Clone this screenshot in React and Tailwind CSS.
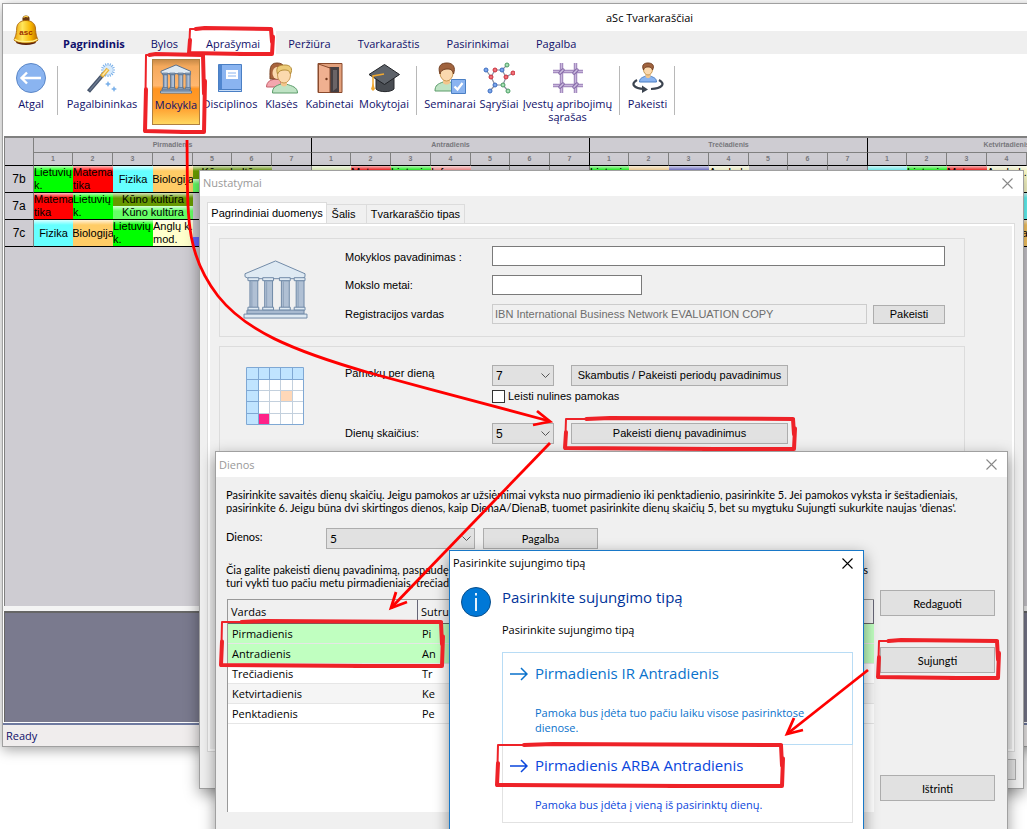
import React from 'react';

const menuItems = ['Bylos', 'Aprašymai', 'Peržiūra', 'Tvarkaraštis', 'Pasirinkimai', 'Pagalba'];
const days = ['Pirmadienis', 'Antradienis', 'Trečiadienis', 'Ketvirtadienis'];
const colWidths = ['w-[39px]', 'w-[40px]', 'w-[40px]', 'w-[40px]', 'w-[39px]', 'w-[40px]', 'w-[40px]'];

const subjects = {
  L: { lines: ['Lietuvių', 'k.'], color: 'bg-[#00ff00]' },
  M: { lines: ['Matema', 'tika'], color: 'bg-[#ff0000]' },
  F: { lines: ['Fizika'], color: 'bg-[#66ffff]' },
  B: { lines: ['Biologija'], color: 'bg-[#ffcc66]' },
  A: { lines: ['Anglų k.', 'mod.'], color: 'bg-[#ffffcc]' },
  I: { lines: ['Inf.', ''], color: 'bg-[#ff8080]' },
  y: { lines: [], color: 'bg-[#e4f7b4]' },
  t: { lines: [], color: 'bg-[#ffd78c]' },
  p: { lines: [], color: 'bg-[#6666cc]' },
  c: { lines: [], color: 'bg-[#66ffff]' },
};

// K takes two columns, "-" is an empty lesson
const classes = [
  { name: '7b', lessons: 'LMFBK-' + 'yMLI---' + 'LtpA---' + 'cLMA---' },
  { name: '7a', lessons: 'MLK---' + '-------' + '-------' + '---F---' },
  { name: '7c', lessons: 'FBLAW--' + '-------' + '-------' + '---B---' },
];

const dayRows = [
  ['Pirmadienis', 'Pi', 'bg-[#c0ffc0]'],
  ['Antradienis', 'An', 'bg-[#c0ffc0]'],
  ['Trečiadienis', 'Tr', 'bg-white'],
  ['Ketvirtadienis', 'Ke', 'bg-[#f5f5f5]'],
  ['Penktadienis', 'Pe', 'bg-white'],
];

const BellLogo = () => (
  <svg className="w-8 h-8" viewBox="0 0 32 32" aria-hidden="true">
    <defs>
      <linearGradient id="bell" x1="0" x2="1">
        <stop offset="0" stopColor="#e89a00" />
        <stop offset="0.35" stopColor="#ffe65c" />
        <stop offset="0.7" stopColor="#f7b500" />
        <stop offset="1" stopColor="#b86a00" />
      </linearGradient>
    </defs>
    <ellipse cx="15" cy="28" rx="10" ry="3" fill="#5a1f08" />
    <circle cx="15" cy="5" r="3.600" fill="#6b3a10" />
    <path d="M12.500 3.600a3 3 0 0 1 4.600-.4" stroke="#ffd34a" fill="none" strokeWidth="1.200" />
    <path d="M3 26c1-3 2.500-5 2.700-12C6 9 10 6.500 15 6.500S24 9 24.500 14c.2 7 1.500 9 2.500 12-3 4-21 4-24 0z" fill="url(#bell)" stroke="#a35c00" strokeWidth="0.800" />
    <path d="M3.500 25c4 3.600 19 3.600 23 0" stroke="#ffef8a" fill="none" strokeWidth="1.300" />
    <text x="15" y="20.500" textAnchor="middle" fontSize="8" fontWeight="700" fill="#9c2f00" fontFamily="Liberation Sans, sans-serif">asc</text>
  </svg>
);

const BackIcon = () => (
  <svg className="w-8 h-8" viewBox="0 0 32 32">
    <circle cx="16" cy="16" r="14.500" fill="#8ab4f0" stroke="#5b87c7" />
    <path d="M26 16H7M12 10.500L6.500 16l5.500 5.500" fill="none" stroke="#fff" strokeWidth="2.400" />
  </svg>
);

const WandIcon = () => (
  <svg className="w-8 h-8" viewBox="0 0 32 32">
    <g stroke="#7db2ea" strokeWidth="1.200">
      <path d="M22 1v14M15 8h14M17 3l10 10M27 3L17 13M19.300 1.500l5.400 13M24.700 1.500l-5.400 13M15.500 5.300l13 5.400M28.500 5.300l-13 5.400" />
    </g>
    <circle cx="22" cy="8" r="4.500" fill="#d8ebfc" />
    <path d="M2.500 29.500L18 11.500" stroke="#45536a" strokeWidth="4" />
    <path d="M3.500 28.500L17 12.500" stroke="#6d7c93" strokeWidth="1.200" />
    <path d="M15.500 14.500L22 7" stroke="#e8b33c" strokeWidth="4" />
    <path d="M16.500 13.500L21.500 7.500" stroke="#ffe9a8" strokeWidth="1.500" />
    <path d="M22 19l1 2 2 1-2 1-1 2-1-2-2-1 2-1zM28 24l1 2 2 1-2 1-1 2-1-2-2-1 2-1z" fill="#7db2ea" />
  </svg>
);

const SchoolIcon = ({ className, line = '#6f89a6', lineWidth = 1 }) => (
  <svg className={className} viewBox="0 0 66 62">
    <g stroke={line} strokeWidth={lineWidth}>
      <path d="M2 15L33 2l30 13v3l-3 2H6l-4-2z" fill="#dfeaf3" />
      {[9, 24, 41, 56].map((x) => (
        <g key={x}>
          <path d={`M${x - 2} 22h8v28h-8z`} fill="#b0c0d4" />
          <path d={`M${x} 23v26`} stroke="#8da1bb" />
          <path d={`M${x - 4} 19h11v3h-11zM${x - 4} 49h11v3h-11z`} fill="#dfeaf3" />
        </g>
      ))}
      <path d="M4 52h58v4H4z" fill="#a8bad0" />
      <path d="M1 56h64v4H1z" fill="#dfeaf3" />
    </g>
  </svg>
);

const BookIcon = () => (
  <svg className="w-8 h-8" viewBox="0 0 32 32">
    <path d="M4.500 2.500h23v27h-23z" fill="#8ab4f0" stroke="#4a7fc4" />
    <path d="M5 3h3v26H5z" fill="#4f86cf" />
    <path d="M4.500 27.500h23v2h-23z" fill="#c9def8" stroke="#4a7fc4" />
    <path d="M12 8h12v9H12z" fill="#fff" />
    <path d="M14 11h8M14 14h8" stroke="#8ab4f0" />
  </svg>
);

const PupilsIcon = () => (
  <svg className="w-8 h-8" viewBox="0 0 32 32">
    <path d="M.5 25c.3-6 4-6.500 8-8h5l3 8z" fill="#f4a6ae" stroke="#c4606c" />
    <path d="M4 17C4 8 3 1 11 1s9 6 8 16z" fill="#a8633c" stroke="#7b4526" />
    <ellipse cx="11" cy="11" rx="4.500" ry="6" fill="#fbd9ae" />
    <path d="M6.500 31c0-6 3-7 8.500-9h5c6 2 11.500 3 11.500 9z" fill="#bfe3c4" stroke="#5c9c6b" />
    <path d="M15 17h6v6c-2 2-4 2-6 0z" fill="#f3c68d" />
    <ellipse cx="18" cy="13" rx="6.500" ry="8" fill="#fbd9ae" stroke="#c99a54" />
    <path d="M11.500 12C9 4 14 3 19 3c6 0 8 4 5.500 9-1-4-4-4-6.500-4s-5.500 1-6.500 4z" fill="#eccb78" stroke="#b58e3c" />
  </svg>
);

const DoorIcon = () => (
  <svg className="w-8 h-8" viewBox="0 0 32 32">
    <path d="M4 1.500h24v29H4z" fill="#e2a07c" stroke="#8a4a2c" />
    <path d="M13 5h12v25.500H13z" fill="#453f42" />
    <path d="M4.500 2L16 6v24.500H4.500z" fill="#f0b090" stroke="#8a4a2c" />
    <path d="M19 8h4v18l-4 3z" fill="#6b6466" />
    <circle cx="12.500" cy="17" r="1.200" fill="#70351c" />
  </svg>
);

const CapIcon = () => (
  <svg className="w-8 h-8" viewBox="0 0 32 32">
    <path d="M8 16v11c3 3.500 15 3.500 18 0V16z" fill="#484c52" stroke="#26282c" />
    <path d="M1 12.500L16.500 2.500 31.500 12.500 16.500 22.500z" fill="#5e636a" stroke="#202226" />
    <path d="M16 12L5 14v13" stroke="#f0a830" strokeWidth="1.500" fill="none" />
    <path d="M5 21l2 6-2 2-2-2z" fill="#f0a830" />
  </svg>
);

const SeminarIcon = () => (
  <svg className="w-8 h-8" viewBox="0 0 32 32">
    <path d="M1 29c0-6 3-7 8-9h7c5 2 7 4 7 9z" fill="#bfe3c4" stroke="#5c9c6b" />
    <path d="M9 15h7v6c-2 2-5 2-7 0z" fill="#f3c68d" />
    <ellipse cx="12.500" cy="11" rx="6.500" ry="8" fill="#fbd9ae" stroke="#c99a54" />
    <path d="M6 12C3 3 8 1 13 1c6 0 9 4 6.500 11-1-5-4-5-6.500-5S7 8 6 12z" fill="#a0633e" stroke="#744123" />
    <path d="M17.500 17.500h14v14h-14z" fill="#8ab4f0" stroke="#4a7fc4" />
    <path d="M20.500 24.500l3 3 5-6.500" stroke="#fff" strokeWidth="2.200" fill="none" />
  </svg>
);

const RelationsIcon = () => (
  <svg className="w-8 h-8" viewBox="0 0 32 32">
    <g strokeWidth="1.200" fill="none" stroke="#8a8fa0">
      <path d="M3 8l5 7 4-7h7l4 7-3 8h-8L8 15M19 8l5-5M23 15l7-4M20 23l5 6M12 23l-5 6" />
    </g>
    <g strokeWidth="1">
      {[[3, 8], [19, 8], [12, 23], [7, 29]].map(([x, y]) => <circle key={x} cx={x} cy={y} r="2" fill="#7aa5ea" stroke="#3c6cc0" />)}
      {[[12, 8], [8, 15], [23, 15], [30, 11]].map(([x, y]) => <circle key={x} cx={x} cy={y} r="2" fill="#f07078" stroke="#c8303c" />)}
      {[[24, 3], [20, 23], [25, 29]].map(([x, y]) => <circle key={x} cx={x} cy={y} r="2" fill="#a8e0b4" stroke="#4a9c64" />)}
    </g>
  </svg>
);

const GridIcon = () => (
  <svg className="w-8 h-8" viewBox="0 0 32 32">
    <g stroke="#a58cc0" strokeWidth="3.500">
      <path d="M9.500 1v30M23.500 1v30M1 9.500h30M1 23.500h30" />
    </g>
    <g stroke="#c9b8dc" strokeWidth="1">
      <path d="M9.500 1v30M23.500 1v30M1 9.500h30M1 23.500h30" />
    </g>
    <g stroke="#8468a6" strokeWidth="3.500" strokeLinecap="round">
      <path d="M8 11l3-3M22 11l3-3M8 25l3-3M22 25l3-3" />
    </g>
    <g stroke="#cdbde0" strokeWidth="1.500" strokeLinecap="round">
      <path d="M8 11l3-3M22 11l3-3M8 25l3-3M22 25l3-3" />
    </g>
  </svg>
);

const SwitchUserIcon = () => (
  <svg className="w-8 h-8" viewBox="0 0 32 32">
    <path d="M7.500 20c0-4 3-4.500 6-6h5c3 1.500 6 2 6 6z" fill="#8ab4f0" stroke="#4a7fc4" />
    <path d="M13.500 11h5v4c-1.500 1.500-3.500 1.500-5 0z" fill="#f3c68d" />
    <ellipse cx="16" cy="7.500" rx="4.500" ry="5.500" fill="#fbd9ae" stroke="#c99a54" />
    <path d="M11.500 8C9 2 13 1 16 1c4 0 7 2 4.500 7-1-3-3-3-4.500-3s-3.500 0-4.500 3z" fill="#a0633e" stroke="#744123" />
    <path d="M5 18c-7 4-3 8.500 7 9M27 18c7 4 3 8.500-8 9" fill="none" stroke="#3c4450" strokeWidth="2.200" />
    <path d="M10 23.500l6 4-6 3.500z" fill="#3c4450" />
  </svg>
);

const PlanIcon = () => (
  <svg className="w-[58px] h-[58px]" viewBox="0 0 58 58">
    <path d="M.5.5h57v57H.5z" fill="#fff" />
    <path d="M1 1h56v11H12v45H1z" fill="#c0e4ff" />
    <path d="M35 24h11v10H35z" fill="#ffd8b8" />
    <path d="M13 46h10v11H13z" fill="#ff2288" />
    <path d="M12.500 12v46M23.500 12v46M34.500 12v46M46.500 12v46M12 23.500h46M12 34.500h46M12 46.500h46" stroke="#c3d0dd" />
    <path d="M.5.5h57v57H.5zM12.500 0v58M0 12.500h58M23.500 0v12M34.500 0v12M46.500 0v12M0 23.500h12M0 34.500h12M0 46.500h12" stroke="#7fa8d4" fill="none" />
  </svg>
);

const CloseButton = ({ className }) => (
  <button type="button" aria-label="Uždaryti" className={`mr-2.5 ${className}`}>
    <svg className="w-[11px] h-[11px]" viewBox="0 0 11 11">
      <path d="M.5.5l10 10M10.500.5l-10 10" stroke="currentColor" fill="none" strokeWidth="1.100" />
    </svg>
  </button>
);

const ToolButton = ({ label, icon, className }) => (
  <button type="button" className={`flex flex-col items-center shrink-0 pt-[3px] text-center leading-[13px] whitespace-pre-line ${className}`}>
    {icon}
    <span className="mt-[3px]">{label}</span>
  </button>
);

const Divider = ({ className }) => (
  <div className={`flex shrink-0 justify-center pt-[7px] ${className}`}>
    <div className="w-px h-[49px] bg-[#b8b8b8]" />
  </div>
);

const PushButton = ({ children, className }) => (
  <button type="button" className={`shrink-0 bg-[#e1e1e1] border border-[#adadad] text-center ${className}`}>{children}</button>
);

const Select = ({ id, value, className }) => (
  <div className={`relative shrink-0 ${className}`}>
    <select id={id} defaultValue={value} className="appearance-none w-full h-[21px] pl-[3px] bg-[#e1e1e1] border border-[#adadad] text-[12px] leading-[18px]">
      <option>{value}</option>
    </select>
    <svg className="absolute right-1 top-2 w-[9px] h-[6px] pointer-events-none" viewBox="0 0 9 6">
      <path d="M.5.5l4 4 4-4" stroke="#555" fill="none" />
    </svg>
  </div>
);

const shade = 'bg-[linear-gradient(to_bottom,rgba(255,255,255,0.75),rgba(255,255,255,0)_5px)]';

const Lesson = ({ code }) => {
  if (code === 'K') {
    return (
      <div className="h-[26px] text-center leading-[13px]">
        <div className={`h-[13px] bg-[#669900] ${shade}`}>Kūno kultūra</div>
        <div className={`h-[13px] bg-[#66ff66] ${shade}`}>Kūno kultūra</div>
      </div>
    );
  }
  if (code === 'W') {
    return (
      <div className="flex flex-col justify-end h-[26px]">
        <div className="h-[9px] bg-[#6666ff]" />
      </div>
    );
  }
  const s = subjects[code];
  if (!s) return <div className="h-[26px] border-r border-[#808080]" />;
  return (
    <div className={`flex flex-col justify-center h-[26px] leading-[13px] overflow-hidden whitespace-nowrap ${s.lines.length === 1 ? 'items-center' : ''} ${s.color} ${shade}`}>
      {s.lines.map((l) => <span key={l} className="block h-[13px]">{l}</span>)}
    </div>
  );
};

const Timetable = () => (
  <table className="table-fixed border-separate border-spacing-0 w-[1141px] font-['Liberation_Sans',Arial,sans-serif] text-[11px]">
    <colgroup>
      <col className="w-[29px]" />
      {days.map((d) => colWidths.map((w, i) => <col key={d + i} className={w} />))}
    </colgroup>
    <thead className="text-[7px] leading-[10px] text-[#77777c]">
      <tr>
        <th rowSpan={2} className="p-0 border-b border-r border-b-black border-r-[#808080]" />
        {days.map((d) => (
          <th key={d} colSpan={7} scope="colgroup" className="h-[15px] p-0 border-b border-r border-b-[#808080] border-r-black">{d}</th>
        ))}
      </tr>
      <tr>
        {days.map((d) => colWidths.map((w, i) => (
          <th key={d + i} scope="col" className={`h-[13px] p-0 border-b border-r border-b-black ${i === 6 ? 'border-r-black' : 'border-r-[#808080]'}`}>{i + 1}</th>
        )))}
      </tr>
    </thead>
    <tbody>
      {classes.map((c) => (
        <tr key={c.name}>
          <th scope="row" className="p-0 border-b border-r border-b-black border-r-[#808080] text-[12px] font-normal">{c.name}</th>
          {c.lessons.split('').map((code, i) => (
            <td key={i} colSpan={code === 'K' ? 2 : 1} className="p-0 border-b border-black">
              <Lesson code={code} />
            </td>
          ))}
        </tr>
      ))}
    </tbody>
  </table>
);

const MainWindow = () => (
  <div className="absolute top-[3px] left-[2px] -right-8 flex flex-col h-[744px] overflow-hidden bg-white border border-[#a0a0a0] shadow-[0_3px_12px_rgba(0,0,0,0.35)] font-['Open_Sans','Noto_Sans',sans-serif] text-[11px] text-[#10106a]">
    <div className="relative shrink-0">
      <div className="absolute left-2 top-2.5"><BellLogo /></div>
      <h1 className="h-[27px] pl-[603px] leading-[27px] text-black">aSc Tvarkaraščiai</h1>
      <nav className="flex items-stretch gap-[3px] h-[23px] pl-[47px] bg-[#efefef] leading-[25px]">
        <a href="#pagrindinis" className="pl-[13px] pr-[11px] font-bold">Pagrindinis</a>
        {menuItems.map((m) => (
          <a key={m} href={`#${m}`} className={m === 'Aprašymai' ? 'px-4 -mx-[3px] bg-white' : 'px-3'}>{m}</a>
        ))}
      </nav>
    </div>
    <div className="flex items-start shrink-0 h-[82px] pt-[5px] pl-[5px]">
      <ToolButton label="Atgal" icon={<BackIcon />} className="w-[46px]" />
      <Divider className="w-[7px]" />
      <ToolButton label="Pagalbininkas" icon={<WandIcon />} className="w-[82px]" />
      <ToolButton
        label="Mokykla"
        icon={<SchoolIcon className="w-8 h-8" line="#55708f" lineWidth={2} />}
        className="w-[48px] h-[66px] ml-[9px] border border-[#b08040] bg-[linear-gradient(to_bottom,#c98b48,#f5a95c_10%,#ffb870_40%,#ff9420_45%,#ffa030_75%,#ffd860)]"
      />
      <ToolButton label="Disciplinos" icon={<BookIcon />} className="w-[60px]" />
      <ToolButton label="Klasės" icon={<PupilsIcon />} className="w-[43px]" />
      <ToolButton label="Kabinetai" icon={<DoorIcon />} className="w-[53px]" />
      <ToolButton label="Mokytojai" icon={<CapIcon />} className="w-[56px]" />
      <Divider className="w-[9px]" />
      <ToolButton label="Seminarai" icon={<SeminarIcon />} className="w-[58px]" />
      <ToolButton label="Sąryšiai" icon={<RelationsIcon />} className="w-[40px]" />
      <ToolButton label={'Įvestų apribojimų\nsąrašas'} icon={<GridIcon />} className="w-[97px]" />
      <Divider className="w-[7px]" />
      <ToolButton label="Pakeisti" icon={<SwitchUserIcon />} className="w-[49px]" />
      <Divider className="w-[5px]" />
    </div>
    <div className="grow ml-px overflow-hidden bg-[#ceccd2] border-t-2 border-l border-[#808080] text-black">
      <Timetable />
    </div>
    <div className="shrink-0 h-[5px] bg-[#f4f4f4]" />
    <div className="shrink-0 h-[111px] ml-px bg-[#7a7a8e] border-t-2 border-l border-[#666]" />
    <div className="shrink-0 h-[23px] mt-px bg-[#f0eded] border-t-2 border-[#6f7aa0] pl-[3px] leading-[22px]">Ready</div>
  </div>
);

const SettingsDialog = () => (
  <section className="absolute left-[199px] top-[170px] flex flex-col w-[825px] h-[619px] bg-[#f0f0f0] border border-[#a0a0a0] shadow-[0_5px_14px_rgba(0,0,0,0.4)] font-['Liberation_Sans',Arial,sans-serif] text-[11px]">
    <header className="flex items-center justify-between h-[25px] shrink-0 pl-[3px] bg-white text-[11px] text-[#999] font-['Open_Sans','Noto_Sans',sans-serif]">
      <h2>Nustatymai</h2>
      <CloseButton className="text-[#888]" />
    </header>
    <div className="flex items-end pt-1.5 pl-[7px]">
      <button type="button" className="h-[21px] w-[120px] bg-white border border-b-0 border-[#dcdcdc]">Pagrindiniai duomenys</button>
      <button type="button" className="h-[19px] w-[40px] pr-1.5 border border-l-0 border-b-0 border-[#dcdcdc]">Šalis</button>
      <button type="button" className="h-[19px] w-[98px] border border-l-0 border-b-0 border-[#dcdcdc]">Tvarkaraščio tipas</button>
    </div>
    <div className="grow ml-[7px] mr-2 p-[11px] pt-3.5 border border-[#dcdcdc] shadow-[inset_0_0_0_2px_#fff]">
      <div className="flex h-[99px] w-[746px] pl-[23px] border border-[#dcdcdc]">
        <div className="w-[102px] pt-5"><SchoolIcon className="w-[65px] h-[61px]" /></div>
        <div className="flex flex-col gap-[9px] pt-[7px]">
          <div className="flex">
            <label htmlFor="school" className="w-[147px] leading-[22px] h-5">Mokyklos pavadinimas :</label>
            <input id="school" type="text" className="w-[453px] h-[20px] px-1 bg-white border border-[#7a7a7a]" />
          </div>
          <div className="flex">
            <label htmlFor="year" className="w-[147px] leading-[20px]">Mokslo metai:</label>
            <input id="year" type="text" className="w-[150px] h-[20px] px-1 bg-white border border-[#7a7a7a]" />
          </div>
          <div className="flex items-center">
            <label htmlFor="owner" className="w-[147px] leading-[18px]">Registracijos vardas</label>
            <input id="owner" type="text" disabled defaultValue="IBN International Business Network EVALUATION COPY" className="w-[375px] h-[20px] px-0.5 bg-[#f0f0f0] border border-[#ccc] text-[#6d6d6d]" />
            <PushButton className="w-[72px] h-[19px] ml-1.5">Pakeisti</PushButton>
          </div>
        </div>
      </div>
      <div className="flex h-[210px] w-[746px] mt-[9px] pl-[26px] border border-[#dcdcdc]">
        <div className="w-[99px] pt-5"><PlanIcon /></div>
        <div className="pt-[18px]">
          <div className="flex">
            <label htmlFor="lessons" className="w-[147px] leading-[17px]">Pamokų per dieną</label>
            <Select id="lessons" value="7" className="w-[62px]" />
            <PushButton className="w-[217px] h-[21px] ml-[17px]">Skambutis / Pakeisti periodų pavadinimus</PushButton>
          </div>
          <label className="flex items-center gap-[3px] h-[20px] ml-[147px]">
            <input type="checkbox" className="appearance-none w-[13px] h-[13px] bg-white border border-[#333]" />
            Leisti nulines pamokas
          </label>
          <div className="flex mt-[17px]">
            <label htmlFor="dayCount" className="w-[147px] leading-[20px]">Dienų skaičius:</label>
            <Select id="dayCount" value="5" className="w-[62px]" />
            <PushButton className="w-[217px] h-[21px] ml-[17px]">Pakeisti dienų pavadinimus</PushButton>
          </div>
        </div>
      </div>
    </div>
    <footer className="flex justify-end pt-[7px] pr-[7px] pb-2">
      <PushButton className="w-[75px] h-[21px]" />
    </footer>
  </section>
);

const DaysDialog = () => (
  <section className="absolute left-[215px] top-[451px] flex flex-col w-[793px] h-[420px] bg-[#f0f0f0] border border-[#a0a0a0] shadow-[0_5px_14px_rgba(0,0,0,0.4)] font-['Lato','Open_Sans',sans-serif] text-[11px] leading-[13px]">
    <header className="flex items-center justify-between h-[25px] shrink-0 pl-[3px] bg-white text-[#999] font-['Open_Sans','Noto_Sans',sans-serif]">
      <h2>Dienos</h2>
      <CloseButton className="text-[#888]" />
    </header>
    <div className="px-2.5 pt-[11px]">
      <p className="whitespace-nowrap">
        Pasirinkite savaitės dienų skaičių. Jeigu pamokos ar užsiėmimai vyksta nuo pirmadienio iki penktadienio, pasirinkite 5. Jei pamokos vyksta ir šeštadieniais,<br />
        pasirinkite 6. Jeigu būna dvi skirtingos dienos, kaip DienaA/DienaB, tuomet pasirinkite dienų skaičių 5, bet su mygtuku Sujungti sukurkite naujas 'dienas'.
      </p>
      <div className="flex mt-3.5">
        <label htmlFor="days" className="w-[100px] pt-0.5">Dienos:</label>
        <Select id="days" value="5" className="w-[149px]" />
        <PushButton className="w-[115px] h-[21px] ml-2">Pagalba</PushButton>
      </div>
      <div className="w-[642px] mt-3.5">
        <p className="flex justify-between"><span>Čia galite pakeisti dienų pavadinimą, paspaudę</span><span>s</span></p>
        <p>turi vykti tuo pačiu metu pirmadieniais, trečiadieniais</p>
      </div>
    </div>
    <div className="flex pl-[11px] mt-2.5">
      <div className="w-[647px] h-[213px] bg-white border-t border-l border-[#999]">
        <table className="w-full table-fixed border-separate border-spacing-0 text-left font-['Open_Sans','Noto_Sans',sans-serif]">
          <colgroup><col className="w-[190px]" /><col /></colgroup>
          <thead>
            <tr className="bg-[#f0f0f0]">
              <th scope="col" className="h-[24px] p-0 pl-[3px] font-normal border-b border-[#666] shadow-[inset_-1px_0_0_#667]">Vardas</th>
              <th scope="col" className="h-[24px] p-0 pl-[3px] font-normal border-b border-[#666] shadow-[inset_-1px_0_0_#667]">Sutrumpinimas</th>
            </tr>
          </thead>
          <tbody>
            {dayRows.map(([name, short, bg]) => (
              <tr key={name} className={bg}>
                <td className="h-[20px] p-0 pl-1 border-b border-[#e6e6e6]">{name}</td>
                <td className="h-[20px] p-0 pl-1 border-b border-[#e6e6e6]">{short}</td>
              </tr>
            ))}
          </tbody>
        </table>
      </div>
      <div className="flex flex-col ml-1.5 -mt-[9px]">
        <PushButton className="w-[115px] h-[26px]">Redaguoti</PushButton>
        <PushButton className="w-[115px] h-[26px] mt-[31px]">Sujungti</PushButton>
        <PushButton className="w-[115px] h-[26px] mt-[102px]">Ištrinti</PushButton>
      </div>
    </div>
  </section>
);

const Choice = ({ title, text, className }) => (
  <button type="button" className={`flex items-start w-full pl-[7px] pt-[11px] text-left border ${className}`}>
    <svg className="w-[18px] h-[14px] mt-[3px]" viewBox="0 0 18 14">
      <path d="M0 7h17M11 1l6 6-6 6" stroke="currentColor" fill="none" strokeWidth="1.500" />
    </svg>
    <span className="ml-[7px]">
      <span className="block h-[41px] text-[15px] leading-[19px]">{title}</span>
      <span className="block leading-[15px] whitespace-pre-line">{text}</span>
    </span>
  </button>
);

const JoinDialog = () => (
  <section className="absolute left-[449px] top-[550px] w-[415px] h-[320px] bg-white border border-[#1878c8] shadow-[0_5px_14px_rgba(0,0,0,0.45)] font-['Open_Sans','Noto_Sans',sans-serif] text-[11px]">
    <header className="flex items-center justify-between h-[24px] pl-[3px]">
      <h2>Pasirinkite sujungimo tipą</h2>
      <CloseButton className="text-black" />
    </header>
    <div className="flex pt-[11px] pl-[11px] pr-2.5">
      <svg className="w-[30px] h-[30px] mt-px shrink-0" viewBox="0 0 30 30">
        <circle cx="15" cy="15" r="14.500" fill="#0078d7" stroke="#0a4f8c" />
        <path d="M15 6v2.500M15 11v13" stroke="#fff" strokeWidth="1.800" />
      </svg>
      <div className="grow ml-[11px]">
        <h3 className="text-[15px] leading-[22px] text-[#003399]">Pasirinkite sujungimo tipą</h3>
        <p className="mt-3.5 leading-[16px]">Pasirinkite sujungimo tipą</p>
        <div className="mt-3.5">
          <Choice title="Pirmadienis IR Antradienis" text={'Pamoka bus įdėta tuo pačiu laiku visose pasirinktose\ndienose.'} className="h-[93px] border-[#b8dcf5] text-[#0a72cc]" />
          <Choice title="Pirmadienis ARBA Antradienis" text="Pamoka bus įdėta į vieną iš pasirinktų dienų." className="h-[78px] border-[#e2e2e2] border-t-0 text-[#0a46dc]" />
        </div>
      </div>
    </div>
  </section>
);

// hand-drawn frame: thin upper left side, heavier strokes elsewhere
const Frame = ({ x, y, w, h }) => {
  const r = x + w;
  const b = y + h;
  return (
    <g fill="none" stroke="#ee2228" strokeLinecap="round" strokeLinejoin="round">
      <path d={`M${x + 2} ${b - 3}L${x + 3} ${y + 3}L${r - 3} ${y + 3}`} strokeWidth="2" />
      <path d={`M${x + w * 0.1} ${y + 3}L${x + w * 0.2} ${y + 2}L${r - 4} ${y + 3}L${r - 3} ${y + h / 2}`} strokeWidth="4" />
      <path d={`M${r - 2} ${y + h * 0.35}L${r - 3} ${b - 3}L${x + w * 0.6} ${b - 3}`} strokeWidth="4" />
      <path d={`M${x + 3} ${y + h * 0.45}L${x + 2} ${b - 4}L${x + w * 0.65} ${b - 3}`} strokeWidth="4" />
    </g>
  );
};

const Annotations = () => (
  <svg className="absolute left-0 top-0 w-[1027px] h-[829px] pointer-events-none" viewBox="0 0 1027 829">
    <Frame x={187} y={26} w={88} h={31} />
    <Frame x={143} y={52} w={64} h={83} />
    <Frame x={563} y={416} w={234} h={36} />
    <Frame x={219} y={619} w={226} h={50} />
    <Frame x={876} y={638} w={125} h={43} />
    <Frame x={495} y={742} w={290} h={47} />
    <g fill="none" stroke="#ff0000" strokeWidth="2.800">
      <path d="M187 140C188 215 184 252 218 296C245 330 290 350 370 373C430 389 480 403 549 421" />
      <path d="M537 411L550 421.500L533 425" />
      <path d="M550 443L391 608" />
      <path d="M396 592L391 608L407 602" />
      <path d="M868 670L787 734" />
      <path d="M794 718L787 734L803 730" />
    </g>
  </svg>
);

export default function App() {
  return (
    <main className="relative h-screen overflow-hidden bg-white text-black">
      <MainWindow />
      <SettingsDialog />
      <DaysDialog />
      <JoinDialog />
      <Annotations />
    </main>
  );
}
